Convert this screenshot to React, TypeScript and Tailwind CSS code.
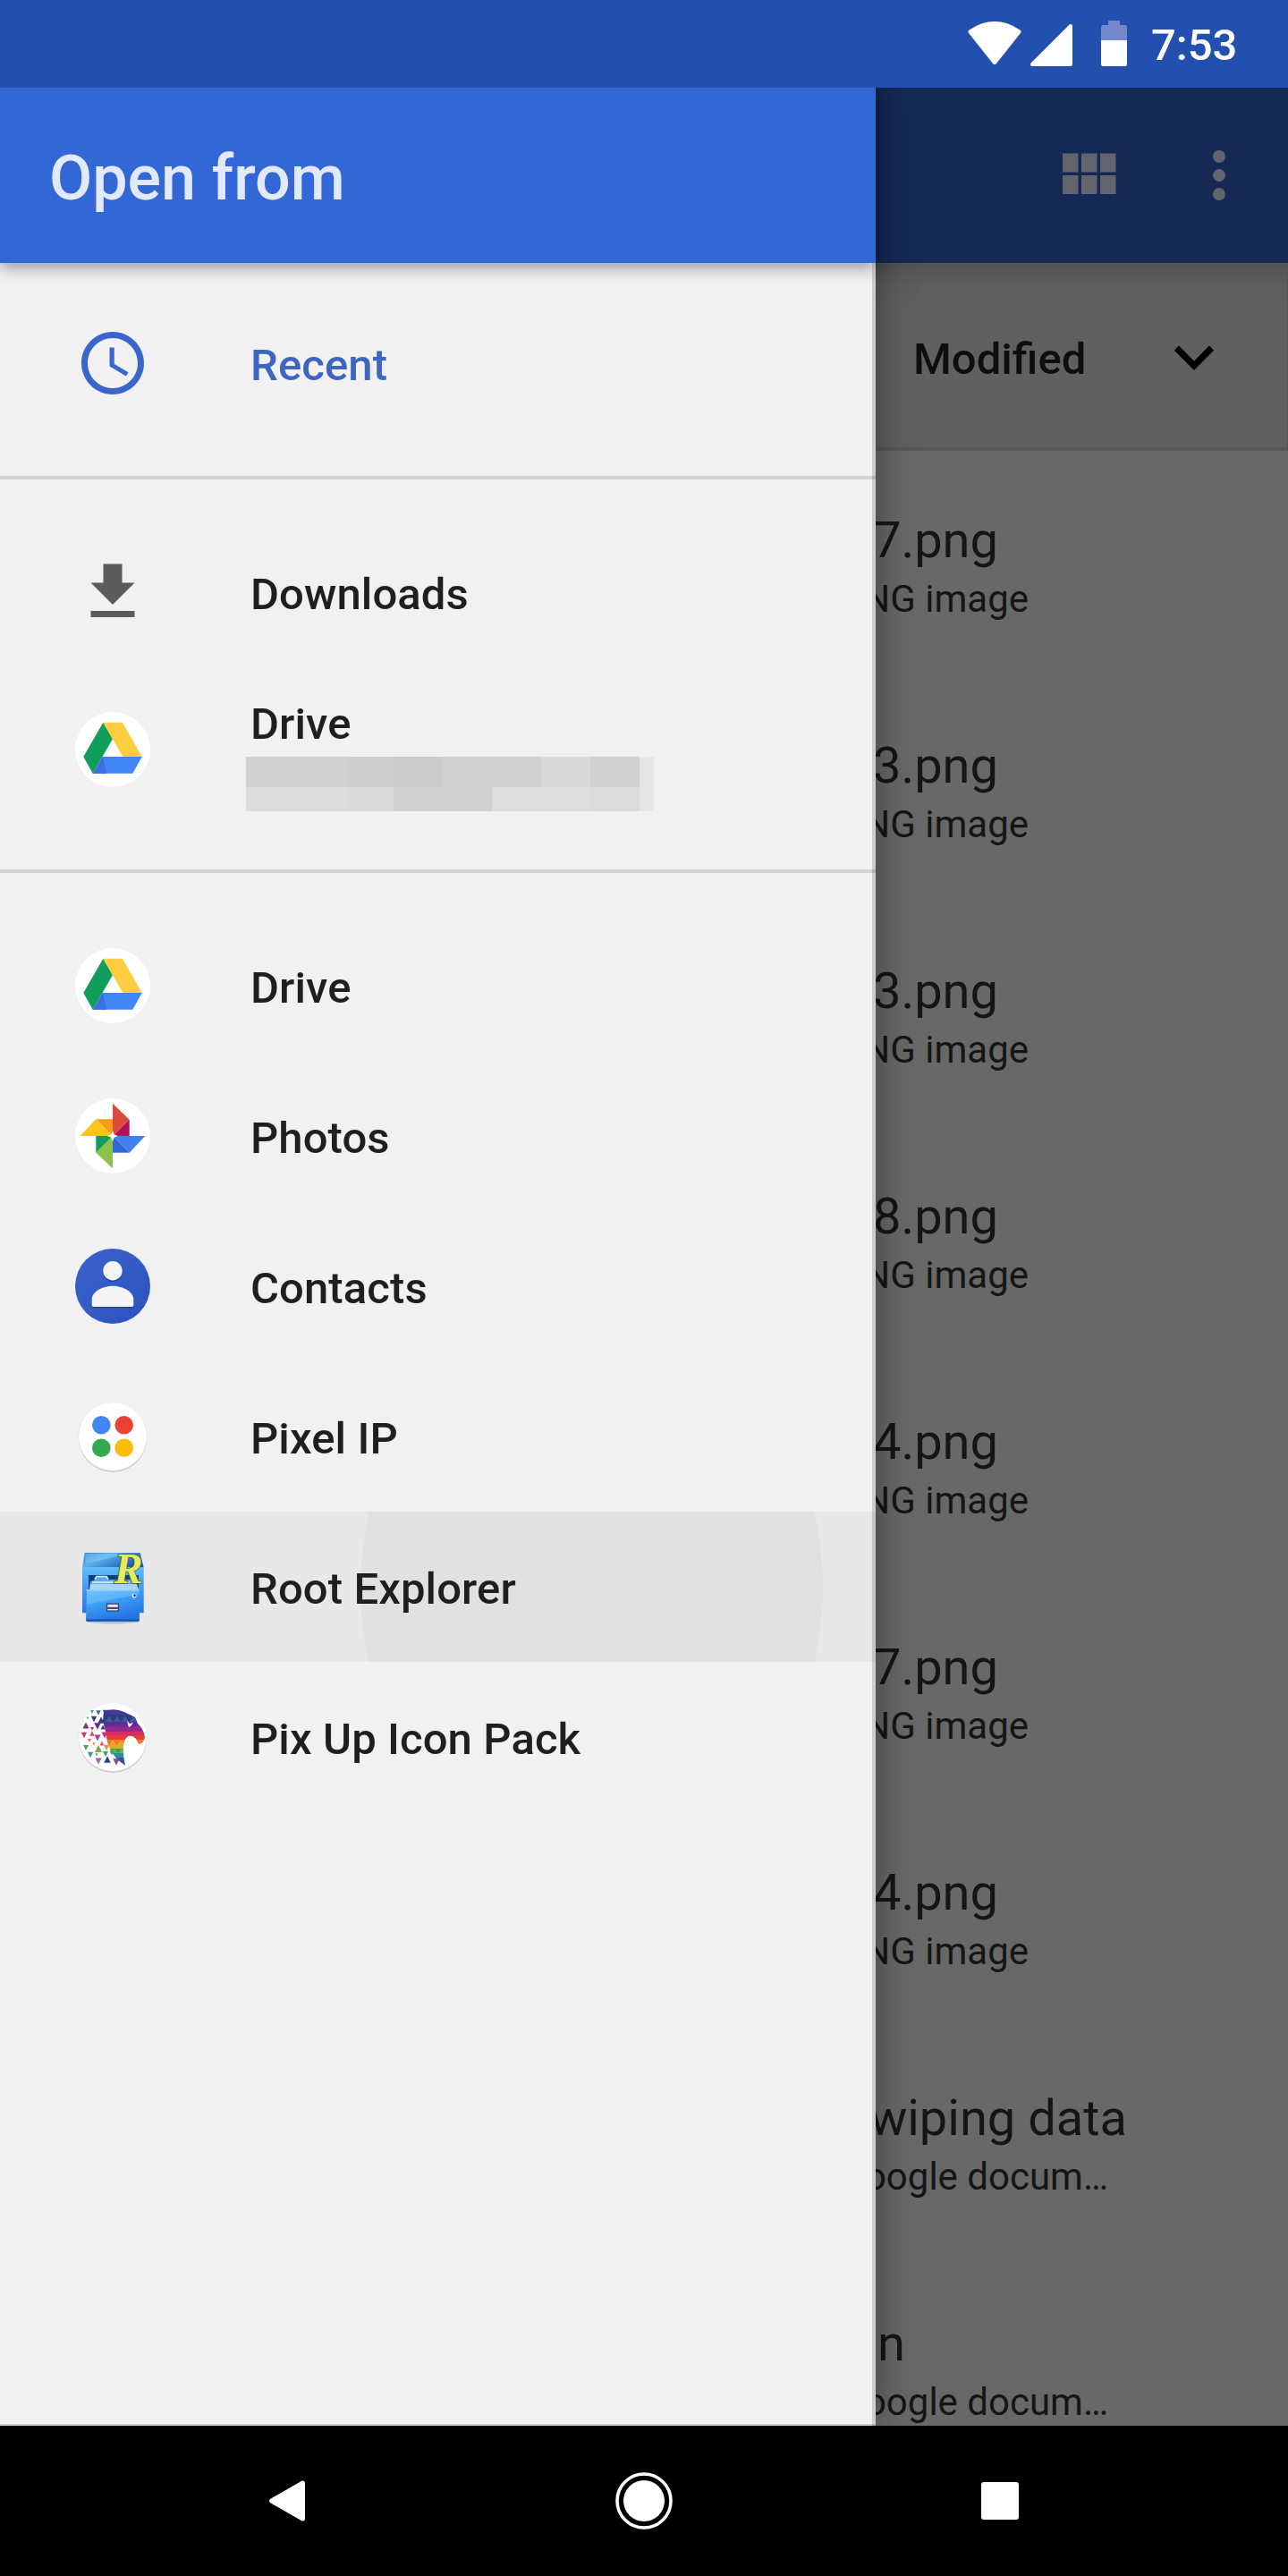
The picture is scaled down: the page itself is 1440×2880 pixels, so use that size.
import type { ReactNode } from "react";

type Source = { label: string; icon: ReactNode; pressed?: boolean };

const files = [
	{ name: "7.png", type: "PNG image" },
	{ name: "3.png", type: "PNG image" },
	{ name: "3.png", type: "PNG image" },
	{ name: "8.png", type: "PNG image" },
	{ name: "4.png", type: "PNG image" },
	{ name: "7.png", type: "PNG image" },
	{ name: "4.png", type: "PNG image" },
	{ name: "wiping data", type: "Google docum…" },
	{ name: "n", type: "Google docum…" },
];

const nameInset: Record<string, string> = {
	"wiping data": "pr-[180px]",
	n: "pr-[428px]",
};

const ClockIcon = () => (
	<svg viewBox="0 0 24 24" className="size-[84px] fill-[#3a66cc]">
		<path d="M11.99 2C6.47 2 2 6.48 2 12s4.47 10 9.99 10C17.52 22 22 17.52 22 12S17.52 2 11.99 2zM12 20c-4.42 0-8-3.58-8-8s3.58-8 8-8 8 3.58 8 8-3.58 8-8 8z" />
		<path d="M12.5 7H11v6l5.25 3.15.75-1.23-4.5-2.67z" />
	</svg>
);

const DownloadIcon = () => (
	<svg viewBox="0 0 24 24" className="size-[84px] fill-[#5b5b5b]">
		<path d="M19 9h-4V3H9v6H5l7 7 7-7zM5 18v2h14v-2H5z" />
	</svg>
);

const DriveIcon = () => (
	<svg viewBox="0 0 84 84" className="size-[84px]">
		<circle cx="42" cy="42" r="42" fill="#fff" />
		<path d="M31.3 11.7 42 30 19.7 68.7 9.3 50z" fill="#119d5a" />
		<path d="M31.3 11.7H53L74.7 50H53.3z" fill="#fecd40" />
		<path d="M30.7 50h44L64.3 68.7H19.7z" fill="#4285f4" />
		<path d="M30.7 50 35 68.7H19.7z" fill="#3a6fe0" />
	</svg>
);

const PhotosIcon = () => (
	<svg viewBox="0 0 84 84" className="size-[84px]">
		<circle cx="42" cy="42" r="42" fill="#fff" />
		<path d="M42 5.7 60.7 23.7 42 42z" fill="#dc4b3f" />
		<path d="M60.7 23.7V42H42z" fill="#ad1457" />
		<path d="M42 42h36.3L60.7 60.7z" fill="#4080f0" />
		<path d="M42 42 60.7 60.7H42z" fill="#3467d6" />
		<path d="M42 42v36.3L23.3 60.7z" fill="#8bc34a" />
		<path d="M42 42 23.3 60.7V42z" fill="#129d58" />
		<path d="M5.7 42 23.3 23.3 42 42z" fill="#fcc31b" />
		<path d="M23.3 23.3H42V42z" fill="#fb9c12" />
		<path d="m42 36 1.7 4.3L48 42l-4.3 1.7L42 48l-1.7-4.3L36 42l4.3-1.7z" fill="#fff" />
	</svg>
);

const ContactsIcon = () => (
	<svg viewBox="0 0 84 84" className="size-[84px]">
		<defs>
			<linearGradient id="contacts" x1="0" y1="0" x2="1" y2="1">
				<stop offset="0" stopColor="#3c62cc" />
				<stop offset="1" stopColor="#2a52be" />
			</linearGradient>
		</defs>
		<circle cx="42" cy="42" r="42" fill="url(#contacts)" />
		<g fill="#1f429f" transform="translate(0 1.6)">
			<circle cx="42" cy="24.7" r="10.7" />
			<path d="M18.7 57c0-9 12-15.3 23.3-15.3S65.3 48 65.3 57v6q0 2-2 2H20.7q-2 0-2-2z" />
		</g>
		<g fill="#f5f5f5">
			<circle cx="42" cy="24.7" r="10.7" />
			<path d="M18.7 57c0-9 12-15.3 23.3-15.3S65.3 48 65.3 57v6q0 2-2 2H20.7q-2 0-2-2z" />
		</g>
	</svg>
);

const Disc = () => (
	<>
		<circle cx="42" cy="44" r="38" fill="#c4c4c4" />
		<circle cx="42" cy="42.6" r="38.5" fill="#dcdcdc" />
		<circle cx="42" cy="42" r="38" fill="#fff" />
	</>
);

const PixelIcon = () => (
	<svg viewBox="0 0 84 84" className="size-[84px]">
		<Disc />
		<circle cx="29.3" cy="29.3" r="10.3" fill="#4285f4" />
		<circle cx="54.7" cy="29.3" r="10.3" fill="#ea4335" />
		<circle cx="29.3" cy="54.7" r="10.3" fill="#34a853" />
		<circle cx="54.7" cy="54.7" r="10.3" fill="#fbbc05" />
	</svg>
);

const RootExplorerIcon = () => (
	<svg viewBox="0 0 84 84" className="size-[84px] overflow-visible">
		<defs>
			<linearGradient id="cabinetTop" x1="0" y1="0" x2="1" y2="0.5">
				<stop offset="0" stopColor="#2f7fd4" />
				<stop offset="0.4" stopColor="#5cb0ee" />
				<stop offset="1" stopColor="#1c58ae" />
			</linearGradient>
			<linearGradient id="cabinetBody" x1="0" y1="0" x2="0" y2="1">
				<stop offset="0" stopColor="#62bbfa" />
				<stop offset="1" stopColor="#2676e2" />
			</linearGradient>
			<linearGradient id="drawerFront" x1="0" y1="0" x2="0.4" y2="1">
				<stop offset="0" stopColor="#62bbfc" />
				<stop offset="0.45" stopColor="#3f9ff5" />
				<stop offset="1" stopColor="#2474e4" />
			</linearGradient>
		</defs>
		<ellipse cx="42" cy="80.5" rx="30" ry="3" fill="#b9c0cc" />
		<path d="M10.7 4h62l4 16.7H8z" fill="url(#cabinetTop)" />
		<path d="M11 5h50L12 16z" fill="#8fd0fa" opacity=".45" />
		<path d="M8 20h68.7v51.3H8z" fill="url(#cabinetBody)" />
		<path d="M15 29h56v17H15z" fill="#123d7c" />
		<path d="M17 36l4-1 3-5h11l3 4h29l2 12H16z" fill="#5cabeb" />
		<path d="M22 33.5l2-3h11l2 3M19 37h42" fill="none" stroke="#dff1fd" strokeWidth="1.4" />
		<path d="M17 39h52l2 6H16z" fill="#a9d4f5" />
		<path d="M13 45.3h58.5l.5 33.5q0 2-2 2H14q-2 0-2-2z" fill="url(#drawerFront)" />
		<path d="M13 45.3h58.5v5L13 62z" fill="#8bd0ff" opacity=".35" />
		<path d="M12.5 45.8h59.3" stroke="#a5dafd" strokeWidth="1.2" />
		<path d="M12.5 79.5h59" stroke="#154fa8" strokeWidth="2" />
		<path d="M35 60.5h14v9H35z" fill="#24437c" />
		<path d="M36.2 61.8h11.6v6.6H36.2z" fill="#ece7ea" />
		<path d="M36.2 64.8h11.6v2.2H36.2z" fill="#643e5c" />
		<circle cx="66" cy="52" r="2.5" fill="#d6ecfb" />
		<circle cx="66.5" cy="51.7" r="1.4" fill="#16418b" />
		<text
			x="43.5"
			y="37.5"
			fontSize="48"
			fill="#e4ec5c"
			stroke="#3a5d4b"
			strokeWidth="1.6"
			paintOrder="stroke"
			className="font-['Liberation_Serif',serif] italic font-bold"
		>
			R
		</text>
	</svg>
);

// x, y, size, colour, points up
const shards: [number, number, number, string, boolean?][] = [
	[19, 14, 4, "#4a9a9a"],
	[26, 15, 5.5, "#39708e"],
	[14, 21, 3, "#61a37c"],
	[21, 22, 6.5, "#3c3a7d"],
	[29, 23, 7.5, "#2b3f86", true],
	[34, 15, 6.5, "#3c3c93"],
	[12, 29, 7, "#8b2c7e", true],
	[25, 30, 7.5, "#702b86"],
	[19, 33, 4, "#bb2f7f"],
	[31, 31, 5, "#42308a", true],
	[10, 40, 6.5, "#c33b86"],
	[19, 38, 5.5, "#d8477a", true],
	[25, 43, 7, "#a34394"],
	[33, 40, 7, "#cc3477"],
	[16, 46, 4, "#d86a5a"],
	[30, 49, 5, "#dd5447", true],
	[21, 50, 3.5, "#dd8a4a"],
	[12, 54, 6, "#54a05e"],
	[26, 55, 8, "#84a642", true],
	[35, 54, 6.5, "#d59a33"],
	[17, 62, 6.5, "#3f9a97"],
	[34, 61, 6, "#39a36b"],
	[24, 62, 3.5, "#55b58c"],
	[26, 69, 7, "#a063a8"],
	[36, 67, 7.5, "#343d8c", true],
	[46, 70, 7.5, "#7950a0"],
	[41, 60, 5, "#3c9b8e"],
];

const PixUpIcon = () => (
	<svg viewBox="0 0 84 84" className="size-[84px]">
		<defs>
			<clipPath id="horse">
				<path d="M32 13Q44 9 55 14L67 20 70 27Q77 34 78 42Q77 49 71 50L68 44Q62 38 57 43Q51 50 56 74L47 67 40 58 36 48 34 36 31 24z" />
			</clipPath>
		</defs>
		<Disc />
		<g clipPath="url(#horse)">
			<path d="M28 10h52v8H28z" fill="#4c3893" />
			<path d="M28 17h52v8H28z" fill="#28407e" />
			<path d="M28 24h52v7H28z" fill="#553094" />
			<path d="M28 30h52v6H28z" fill="#95298a" />
			<path d="M28 36h52v4H28z" fill="#d12d6c" />
			<path d="M28 40h52v5H28z" fill="#e63e35" />
			<path d="M28 45h52v6H28z" fill="#ef7a2e" />
			<path d="M28 51h52v4H28z" fill="#d9ae2c" />
			<path d="M28 55h52v5H28z" fill="#36a24a" />
			<path d="M28 60h52v5H28z" fill="#2e8c9b" />
			<path d="M28 65h52v10H28z" fill="#3b4a9c" />
			<path
				d="m34 25 4-7 4 7zm9 0 4-7 4 7zm9 0 4-7 4 7zm9 0 4-7 4 7z"
				fill="#45569d"
			/>
			<path
				d="m33 31 4-6 4 6zm9 0 4-6 4 6zm9 0 4-6 4 6zm9 0 4-6 4 6z"
				fill="#6d2c95"
			/>
			<path d="m38 51 4-6 4 6zm9 0 4-6 4 6z" fill="#f5a12b" />
			<path d="m40 60 4-5 4 5zm8 0 4-5 4 5z" fill="#6cb63c" />
		</g>
		<path d="m58 24 3 3 4-1-3 4-2 1-1-3z" fill="#fff" />
		{shards.map(([x, y, s, color, up], i) => (
			<path
				key={i}
				d={up ? `M${x - s / 2} ${y + s / 2}h${s}l${-s / 2} ${-s}z` : `M${x - s / 2} ${y - s / 2}h${s}l${-s / 2} ${s}z`}
				fill={color}
			/>
		))}
	</svg>
);

const apps: Source[] = [
	{ label: "Drive", icon: <DriveIcon /> },
	{ label: "Photos", icon: <PhotosIcon /> },
	{ label: "Contacts", icon: <ContactsIcon /> },
	{ label: "Pixel IP", icon: <PixelIcon /> },
	{ label: "Root Explorer", icon: <RootExplorerIcon />, pressed: true },
	{ label: "Pix Up Icon Pack", icon: <PixUpIcon /> },
];

const SourceRow = ({ label, icon, pressed }: Source) => (
	<li
		className={`relative flex items-center h-[168px] pl-[84px] gap-28 overflow-hidden ${pressed ? "bg-[#e8e8e8]" : ""}`}
	>
		{pressed && (
			<span className="absolute left-[403px] top-[-228px] w-[517px] h-[624px] rounded-[50%] bg-[#e1e1e1]"></span>
		)}
		<span className="relative">{icon}</span>
		<span className="relative pt-1.5">{label}</span>
	</li>
);

const Divider = () => <div className="h-1 bg-[#d2d2d2]"></div>;

// Account name, pixelated
const HiddenAccount = () => (
	<svg viewBox="0 0 456 61" className="block w-[456px] h-[61px] -ml-[5px]" shapeRendering="crispEdges">
		<path d="M0 0h113v34H0z" fill="#d1d1d1" />
		<path d="M113 0h52v34h-52z" fill="#cfcfcf" />
		<path d="M165 0h53v34h-53z" fill="#cbcbcb" />
		<path d="M218 0h112v34H218z" fill="#d0d0d0" />
		<path d="M330 0h55v34h-55z" fill="#d9d9d9" />
		<path d="M385 0h55v34h-55z" fill="#d0d0d0" />
		<path d="M0 34h113v27H0z" fill="#dcdcdc" />
		<path d="M113 34h52v27h-52z" fill="#dadada" />
		<path d="M165 34h110v27H165z" fill="#d0d0d0" />
		<path d="M275 34h55v27h-55z" fill="#dddddd" />
		<path d="M330 34h55v27h-55z" fill="#dedede" />
		<path d="M385 34h55v27h-55z" fill="#dbdbdb" />
		<path d="M440 0h16v61h-16z" fill="#e6e6e6" />
	</svg>
);

const StatusBar = () => (
	<div className="flex shrink-0 h-[98px] bg-[#234fae] text-white">
		<svg viewBox="0 0 200 98" className="ml-[1070px] w-[200px] h-[98px]">
			<path
				d="M15 35Q42 17 69 35L42 69z"
				transform="translate(0 .5)"
				fill="#fff"
				stroke="#fff"
				strokeWidth="5"
				strokeLinejoin="round"
			/>
			<path d="M84 72 127 29v43z" fill="#fff" stroke="#fff" strokeWidth="4" strokeLinejoin="round" />
			<path d="M169 23h13v5h6q2 0 2 2v15h-29V30q0-2 2-2h6z" fill="#7288cb" />
			<path d="M161 45h29v27q0 2-2 2h-25q-2 0-2-2z" fill="#fff" />
		</svg>
		<span className="ml-[17px] mt-[22px] text-[49px] leading-[58px] font-medium">7:53</span>
	</div>
);

const FileList = () => (
	<main className="flex-1 flex flex-col min-h-0 overflow-hidden bg-[#686868]">
		<header className="flex shrink-0 items-center justify-end h-[196px] pr-[35px] gap-[63px] bg-[#162954]">
			<svg viewBox="0 0 24 24" className="size-[84px] fill-[#62656f]">
				<path d="M4 11h5V5H4v6zm0 7h5v-6H4v6zm6 0h5v-6h-5v6zm6 0h5v-6h-5v6zm-6-7h5V5h-5v6zm6-6v6h5V5h-5z" />
			</svg>
			<svg viewBox="0 0 24 24" className="size-[84px] fill-[#62656f]">
				<circle cx="12" cy="6" r="2" />
				<circle cx="12" cy="12" r="2" />
				<circle cx="12" cy="18" r="2" />
			</svg>
		</header>
		<div className="flex shrink-0 items-center h-[210px] pl-[1021px] pt-[5px] border-b-4 border-r border-b-[#575757] border-r-[#555] bg-[#606060] bg-linear-to-b from-[#525252] from-0% via-[#5d5d5d] via-12% to-[#606060] to-25%">
			<span className="pt-1 text-[49px] leading-[58px] font-medium text-[#0e0e0e]">Modified</span>
			<svg viewBox="0 0 24 24" className="ml-[79px] size-[84px]">
				<path d="m6.4 8.9 5.6 5.6 5.6-5.6" fill="none" stroke="#000" strokeWidth="2.1" />
			</svg>
		</div>
		<ul className="shrink-0">
			{files.map((file, i) => (
				<li key={i} className="h-[252px] pt-[67px] text-right text-[#151515]">
					<p className={`text-[56px] leading-[66px] ${nameInset[file.name] ?? "pr-[324px]"}`}>{file.name}</p>
					<p
						className={`mt-2 text-[42px] leading-[50px] ${file.type === "PNG image" ? "pr-[290px]" : "pr-[201px]"}`}
					>
						{file.type}
					</p>
				</li>
			))}
		</ul>
	</main>
);

const Drawer = () => (
	<aside className="absolute left-0 top-[98px] bottom-[168px] w-[979px] bg-[#f1f1f1] text-[#1f1f1f] text-[49px] leading-[58px] tracking-[0.1px] font-medium shadow-[0_0_40px_rgba(0,0,0,0.4)] [clip-path:inset(0_-60px_0_0)]">
		<header className="relative z-10 flex items-center h-[196px] pl-[55px] pt-[6px] bg-[#3367d6] text-[70px] text-[#e1e9fb] tracking-normal shadow-[0_6px_16px_rgba(0,0,0,0.35)]">
			<h1>Open from</h1>
		</header>
		<ul className="pt-7 pb-[42px] text-[#3c66c0]">
			<SourceRow label="Recent" icon={<ClockIcon />} />
		</ul>
		<Divider />
		<ul className="py-[42px]">
			<SourceRow label="Downloads" icon={<DownloadIcon />} />
			<li className="flex items-center h-[184px] pl-[84px] gap-28">
				<DriveIcon />
				<div className="pt-3">
					<p className="mb-[7px]">Drive</p>
					<HiddenAccount />
				</div>
			</li>
		</ul>
		<Divider />
		<ul className="pt-[42px]">
			{apps.map((app) => (
				<SourceRow key={app.label} {...app} />
			))}
		</ul>
		<div className="absolute right-0 top-[196px] bottom-0 w-1 bg-black/15"></div>
		<div className="absolute inset-x-0 bottom-0 h-0.5 bg-black/15"></div>
	</aside>
);

const NavBar = () => (
	<nav className="flex shrink-0 justify-between items-center h-[168px] pl-[300px] pr-[301px] bg-black">
		<svg viewBox="0 0 42 46" className="w-[42px] h-[46px]">
			<path d="M3.6 23 38.5 3v40z" fill="#fff" stroke="#fff" strokeWidth="5" strokeLinejoin="round" />
		</svg>
		<svg viewBox="0 0 64 64" className="size-16">
			<circle cx="32" cy="32" r="30" fill="none" stroke="#fff" strokeWidth="3.6" />
			<circle cx="32" cy="32" r="23" fill="#fff" />
		</svg>
		<span className="size-[42px] rounded-[3px] bg-white"></span>
	</nav>
);

export default function App() {
	return (
		<div className="relative flex flex-col w-[1440px] h-[2880px] overflow-hidden font-[Roboto,sans-serif]">
			<StatusBar />
			<FileList />
			<Drawer />
			<NavBar />
		</div>
	);
}
